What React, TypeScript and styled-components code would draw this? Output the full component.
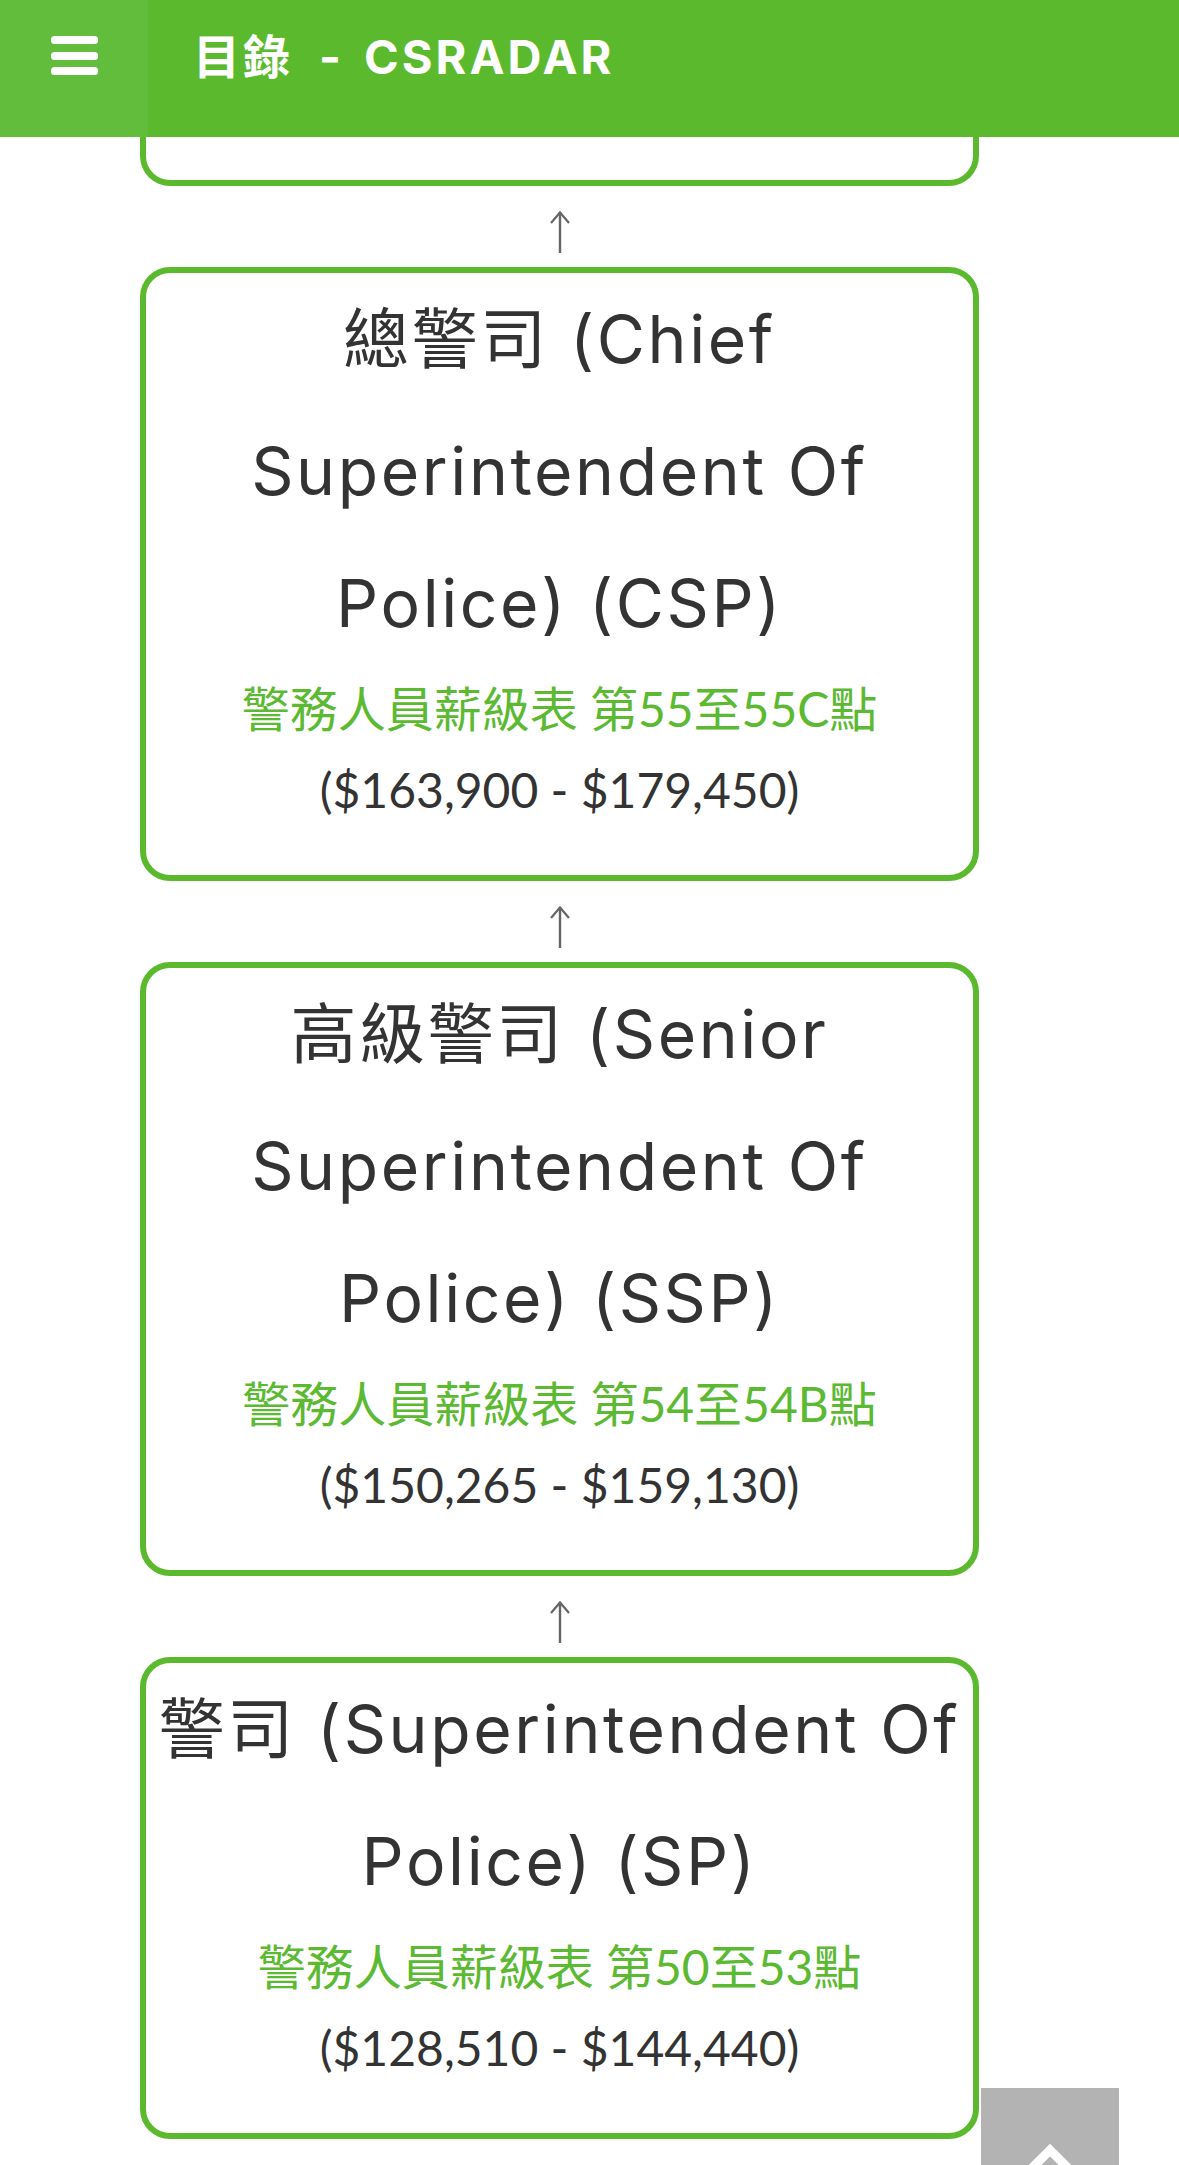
import React, { Fragment } from "react";
import styled, { createGlobalStyle } from "styled-components";

const GREEN = "#5bb92e";

const GlobalStyle = createGlobalStyle`
  html, body {
    margin: 0;
    padding: 0;
    background: #ffffff;
  }
  body {
    font-family: "Lato", "Noto Sans CJK TC", sans-serif;
    color: #333333;
  }
  * { box-sizing: border-box; }
`;

const Page = styled.div`
  width: 1179px;
  min-height: 2165px;
  background: #ffffff;
`;

const Header = styled.header`
  display: flex;
  align-items: flex-start;
  height: 137px;
  background: ${GREEN};
`;

const MenuButton = styled.button`
  display: flex;
  justify-content: center;
  align-items: flex-start;
  width: 148px;
  height: 137px;
  padding: 36px 0 0;
  margin: 0;
  border: none;
  background: #63bd3c;
  cursor: pointer;
`;

const Brand = styled.h1`
  margin: 0 0 0 45px;
  font-family: "Inter", "Noto Sans CJK TC", sans-serif;
  font-weight: 700;
  font-size: 47px;
  line-height: 114px;
  letter-spacing: 3px;
  color: #ffffff;
  white-space: nowrap;
`;

const Dash = styled.span`
  margin: 0 20px 0 26px;
`;

const Content = styled.main`
  display: flex;
  flex-direction: column;
  padding: 0 200px 0 140px;
`;

const Card = styled.section<{ $clipped?: boolean }>`
  border: 6px solid ${GREEN};
  border-top-width: ${(p) => (p.$clipped ? "0" : "6px")};
  border-radius: ${(p) => (p.$clipped ? "0 0 30px 30px" : "30px")};
  height: ${(p) => (p.$clipped ? "49px" : "auto")};
  padding: ${(p) => (p.$clipped ? "0" : "0 0 45px")};
  text-align: center;
`;

const Title = styled.h2`
  margin: 0;
  font-family: "Inter", "Noto Sans CJK TC", sans-serif;
  font-weight: 400;
  font-size: 66px;
  line-height: 132px;
  letter-spacing: 2.6px;
  color: #333333;
`;

const Scale = styled.p`
  margin: 0;
  font-family: "Lato", "Noto Sans CJK TC", sans-serif;
  font-size: 48px;
  line-height: 80px;
  color: #5cb932;
`;

const Salary = styled.p`
  margin: 0;
  font-family: "Lato", sans-serif;
  font-size: 48px;
  line-height: 81px;
  color: #333333;
`;

const Connector = styled.div`
  display: flex;
  justify-content: center;
  align-items: flex-start;
  height: 81px;
  padding-top: 24px;
`;

const BackToTop = styled.button`
  position: fixed;
  right: 60px;
  bottom: -61px;
  width: 138px;
  height: 138px;
  padding: 0;
  border: none;
  background: #b3b3b3;
  display: block;
  cursor: pointer;
`;

const MenuIcon = () => (
  <svg width="47" height="39" viewBox="0 0 47 39" aria-hidden="true">
    <rect x="0" y="0" width="47" height="8" rx="3.5" fill="#ffffff" />
    <rect x="0" y="16" width="47" height="8" rx="3.5" fill="#ffffff" />
    <rect x="0" y="31" width="47" height="8" rx="3.5" fill="#ffffff" />
  </svg>
);

const ArrowUp = () => (
  <svg width="22" height="43" viewBox="0 0 22 43" aria-hidden="true">
    <line x1="11" y1="2" x2="11" y2="43" stroke="#666666" strokeWidth="2.4" />
    <polyline
      points="2,13 11,2.5 20,13"
      fill="none"
      stroke="#666666"
      strokeWidth="2.2"
      strokeLinejoin="miter"
    />
  </svg>
);

const ChevronUp = () => (
  <svg width="138" height="138" viewBox="0 0 138 138" aria-hidden="true">
    <polyline
      points="33,98 69,62 105,98"
      fill="none"
      stroke="#ffffff"
      strokeWidth="9"
      strokeLinejoin="miter"
    />
  </svg>
);

type Rank = {
  title: string;
  scale: string;
  salary: string;
};

const ranks: Rank[] = [
  {
    title: "總警司 (Chief Superintendent Of Police) (CSP)",
    scale: "警務人員薪級表 第55至55C點",
    salary: "($163,900 - $179,450)",
  },
  {
    title: "高級警司 (Senior Superintendent Of Police) (SSP)",
    scale: "警務人員薪級表 第54至54B點",
    salary: "($150,265 - $159,130)",
  },
  {
    title: "警司 (Superintendent Of Police) (SP)",
    scale: "警務人員薪級表 第50至53點",
    salary: "($128,510 - $144,440)",
  },
];

export default function App() {
  return (
    <Page>
      <GlobalStyle />
      <Header>
        <MenuButton aria-label="menu">
          <MenuIcon />
        </MenuButton>
        <Brand>
          目錄<Dash>-</Dash>CSRADAR
        </Brand>
      </Header>
      <Content>
        <Card $clipped />
        {ranks.map((r) => (
          <Fragment key={r.salary}>
            <Connector>
              <ArrowUp />
            </Connector>
            <Card>
              <Title>{r.title}</Title>
              <Scale>{r.scale}</Scale>
              <Salary>{r.salary}</Salary>
            </Card>
          </Fragment>
        ))}
      </Content>
      <BackToTop aria-label="back to top">
        <ChevronUp />
      </BackToTop>
    </Page>
  );
}
